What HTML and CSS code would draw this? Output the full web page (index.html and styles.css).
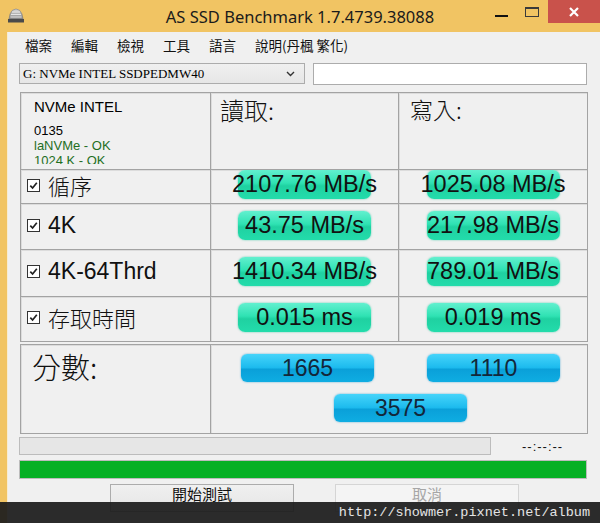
FILE: index.html
```html
<!DOCTYPE html>
<html lang="zh-Hant">
<head>
    <meta charset="UTF-8">
    <meta name="viewport" content="width=device-width, initial-scale=1.0">
    <title>AS SSD Benchmark</title>
    <link rel="stylesheet" href="styles.css">
</head>
<body>
    <div class="window">
        <div class="titlebar">
            <svg class="app-icon" width="18" height="15" viewBox="0 0 18 15">
                <defs>
                    <linearGradient id="dome" x1="0" y1="0" x2="0" y2="1">
                        <stop offset="0" stop-color="#d8d8d8"/>
                        <stop offset="1" stop-color="#8a8a8a"/>
                    </linearGradient>
                </defs>
                <path d="M2 11 L3 6 Q5 1 9 1 Q13 1 15 6 L16 11 Z" fill="url(#dome)" stroke="#777" stroke-width="0.6"/>
                <path d="M5 4 L13 4 M4 6.5 L14 6.5 M3.5 9 L14.5 9" stroke="#f2f2f2" stroke-width="0.8"/>
                <rect x="1" y="11" width="16" height="3.5" fill="#4a4a4a"/>
            </svg>
            <div class="title">AS SSD Benchmark 1.7.4739.38088</div>
            <div class="win-buttons">
                <span class="btn-min"></span>
                <span class="btn-max"></span>
                <span class="btn-close">
                    <svg width="10" height="10" viewBox="0 0 10 10">
                        <path d="M1 1 L9 9 M9 1 L1 9" stroke="#fff" stroke-width="2.2"/>
                    </svg>
                </span>
            </div>
        </div>

        <div class="frame">
            <div class="client">
                <ul class="menu">
                    <li>檔案</li>
                    <li>編輯</li>
                    <li>檢視</li>
                    <li>工具</li>
                    <li>語言</li>
                    <li>說明(丹楓 繁化)</li>
                </ul>

                <div class="drive-row">
                    <div class="combo">
                        <span>G: NVMe INTEL SSDPEDMW40</span>
                        <svg width="9" height="6" viewBox="0 0 9 6">
                            <path d="M1 1 L4.5 4.5 L8 1" fill="none" stroke="#333" stroke-width="1.4"/>
                        </svg>
                    </div>
                    <div class="textbox"></div>
                </div>

                <div class="results">
                    <div class="cell info">
                        <div class="drive-name">NVMe INTEL</div>
                        <div class="drive-lines">
                            <div>0135</div>
                            <div class="ok">laNVMe - OK</div>
                            <div class="ok">1024 K - OK</div>
                        </div>
                    </div>
                    <div class="cell head read">讀取:</div>
                    <div class="cell head write">寫入:</div>

                    <div class="cell label tight"><span class="check"></span><span class="cjk">循序</span></div>
                    <div class="cell value tight"><div class="pill">2107.76 MB/s</div></div>
                    <div class="cell value tight"><div class="pill">1025.08 MB/s</div></div>

                    <div class="cell label"><span class="check"></span><span>4K</span></div>
                    <div class="cell value"><div class="pill">43.75 MB/s</div></div>
                    <div class="cell value"><div class="pill">217.98 MB/s</div></div>

                    <div class="cell label"><span class="check"></span><span>4K-64Thrd</span></div>
                    <div class="cell value"><div class="pill">1410.34 MB/s</div></div>
                    <div class="cell value"><div class="pill">789.01 MB/s</div></div>

                    <div class="cell label last"><span class="check"></span><span class="cjk">存取時間</span></div>
                    <div class="cell value last"><div class="pill">0.015 ms</div></div>
                    <div class="cell value last"><div class="pill">0.019 ms</div></div>
                </div>

                <div class="score">
                    <div class="cell score-label">分數:</div>
                    <div class="cell score-values">
                        <div class="score-row">
                            <div class="score-pill">1665</div>
                            <div class="score-pill">1110</div>
                        </div>
                        <div class="score-row">
                            <div class="score-pill">3575</div>
                        </div>
                    </div>
                </div>

                <div class="progress-row">
                    <div class="progress"></div>
                    <div class="time">--:--:--</div>
                </div>
                <div class="green-bar"></div>

                <div class="actions">
                    <button class="btn">開始測試</button>
                    <button class="btn" disabled>取消</button>
                </div>
            </div>
        </div>

        <div class="watermark">http://showmer.pixnet.net/album</div>
    </div>
</body>
</html>
```

FILE: styles.css
```css
* {
    box-sizing: border-box;
}
html, body {
    margin: 0;
    padding: 0;
}
body {
    width: 600px;
    height: 523px;
    overflow: hidden;
    font-family: "Liberation Sans", Arial, sans-serif;
    background: #f0f0f0;
}
.window {
    position: relative;
    width: 600px;
    height: 523px;
    background: #f1c463;
    display: flex;
    flex-direction: column;
}

/* title bar */
.titlebar {
    flex: none;
    height: 32px;
    display: grid;
    grid-template-columns: 1fr auto 1fr;
    align-items: start;
}
.app-icon {
    margin: 8px 0 0 7px;
}
.title {
    font-family: "Noto Sans", "Liberation Sans", sans-serif;
    font-size: 16.5px;
    line-height: 34px;
    color: #1b1b1b;
}
.win-buttons {
    justify-self: end;
    display: flex;
    align-items: flex-start;
}
.btn-min {
    width: 13px;
    height: 2px;
    background: #111;
    margin: 15px 17px 0 0;
}
.btn-max {
    width: 14px;
    height: 10px;
    border: 1px solid #3a3a3a;
    border-top-width: 2px;
    margin: 7px 9px 0 0;
}
.btn-close {
    width: 52px;
    height: 23px;
    background: #c9524b;
    display: flex;
    align-items: center;
    justify-content: center;
}

/* client area */
.frame {
    flex: 1;
    display: flex;
    padding-left: 7px;
}
.client {
    flex: 1;
    background: #f0f0f0;
    border-left: 1px solid #f7ecd2;
}
.menu {
    list-style: none;
    margin: 0;
    padding: 0 0 0 17px;
    height: 26px;
    display: flex;
    gap: 19px;
    font-family: "Noto Sans CJK TC", sans-serif;
    font-size: 13.5px;
    line-height: 26px;
    color: #111;
}
.drive-row {
    display: flex;
    gap: 8px;
    margin: 5px 0 0 11px;
}
.combo {
    width: 286px;
    height: 21px;
    border: 1px solid #acacac;
    background: linear-gradient(#f0f0f0, #e6e6e6);
    display: flex;
    align-items: center;
    justify-content: space-between;
    padding: 0 9px 0 3px;
    font-family: "Liberation Serif", serif;
    font-size: 13px;
    color: #000;
}
.textbox {
    width: 274px;
    height: 22px;
    border: 1px solid #acacac;
    background: #fff;
}

/* results table */
.results, .score {
    display: grid;
    gap: 1px;
    width: 568px;
    margin-left: 12px;
    border: 1px solid #a3a3a3;
    background: #a3a3a3;
}
.results {
    margin-top: 7px;
    grid-template-columns: 189px 187px 188px;
    grid-template-rows: 76px 33px 45px 46px 44px;
}
.cell {
    background: #f0f0f0;
    box-shadow: inset 1px 1px 0 #dcdcdc;
    overflow: hidden;
}
.info {
    padding: 5px 13px 0;
}
.drive-name {
    font-size: 15px;
    line-height: 17px;
    margin-bottom: 8px;
}
.drive-lines {
    height: 41px;
    overflow: hidden;
    font-size: 13px;
    line-height: 15px;
}
.drive-lines .ok {
    color: #1f6f1f;
}
.head {
    overflow: visible;
    font-family: "Noto Sans CJK TC", sans-serif;
    font-weight: 300;
    font-size: 24px;
    line-height: 34px;
    color: #111;
}
.read {
    padding: 0 0 0 9px;
}
.write {
    padding: 0 0 0 11px;
    font-size: 23px;
    line-height: 32px;
}
.label {
    display: flex;
    align-items: flex-start;
    padding: 7px 0 0 6px;
    font-size: 23px;
    line-height: 29px;
    color: #111;
}
.label .check {
    width: 13px;
    height: 13px;
    margin: 8px 8px 0 0;
    border: 1px solid #333;
    background: #fff url("data:image/svg+xml,%3Csvg xmlns='http://www.w3.org/2000/svg' width='11' height='11'%3E%3Cpath d='M2.3 5.6 L4.6 8 L8.8 2.8' fill='none' stroke='%23222' stroke-width='1.7'/%3E%3C/svg%3E") no-repeat center;
}
.label .cjk {
    font-family: "Noto Sans CJK TC", sans-serif;
    font-weight: 300;
    font-size: 22px;
}
.label.tight {
    padding-top: 1px;
}
.label.last {
    padding-top: 6px;
}
.value {
    display: flex;
    justify-content: center;
    padding-top: 7px;
}
.value.tight {
    padding-top: 0;
}
.value.last {
    padding-top: 6px;
}
.pill {
    width: 133px;
    height: 29px;
    border-radius: 7px;
    background: linear-gradient(#62f0cf, #2fe2b3 45%, #1fd1a1 55%, #23dcab);
    box-shadow: 0 0 2px rgba(20, 190, 150, 0.7);
    display: flex;
    justify-content: center;
    align-items: center;
    white-space: nowrap;
    font-size: 23.5px;
    color: #111;
}

/* score */
.score {
    margin-top: 2px;
    grid-template-columns: 189px 1fr;
    height: 90px;
}
.score-label {
    padding: 3px 0 0 11px;
    font-family: "Noto Sans CJK TC", sans-serif;
    font-weight: 300;
    font-size: 29px;
    line-height: 36px;
    color: #111;
}
.score-values {
    display: flex;
    flex-direction: column;
    align-items: center;
    gap: 12px;
    padding-top: 9px;
}
.score-row {
    display: flex;
    gap: 53px;
    padding-left: 3px;
}
.score-pill {
    width: 133px;
    height: 28px;
    border-radius: 6px;
    background: linear-gradient(#46d4fa, #1dbbee 48%, #0aa0d9 55%, #0fade2);
    box-shadow: 0 0 2px rgba(10, 140, 200, 0.7);
    display: flex;
    justify-content: center;
    align-items: center;
    font-size: 23px;
    color: #13273a;
}

/* progress and buttons */
.progress-row {
    display: flex;
    align-items: center;
    margin: 3px 0 0 11px;
}
.progress {
    width: 472px;
    height: 18px;
    border: 1px solid #bcbcbc;
    background: #e6e6e6;
}
.time {
    margin-left: 31px;
    font-size: 13px;
    letter-spacing: 1px;
    color: #111;
}
.green-bar {
    width: 568px;
    height: 19px;
    margin: 5px 0 0 11px;
    border: 1px solid #bcbcbc;
    background: #06b025;
}
.actions {
    display: flex;
    gap: 41px;
    margin: 5px 0 0 102px;
}
.btn {
    width: 184px;
    height: 28px;
    border: 1px solid #acacac;
    background: linear-gradient(#f0f0f0, #e5e5e5);
    font-family: "Noto Sans CJK TC", sans-serif;
    font-size: 15px;
    line-height: 18px;
    color: #111;
    padding: 0 0 8px;
}
.btn:disabled {
    border-color: #d5d5d5;
    background: #f4f4f4;
    color: #a6a6a6;
}

/* watermark over the bottom edge */
.watermark {
    position: absolute;
    left: 0;
    right: 0;
    bottom: 0;
    height: 21px;
    padding-right: 10px;
    background: rgba(28, 28, 28, 0.93);
    text-align: right;
    font-family: "Liberation Mono", monospace;
    font-size: 13.5px;
    line-height: 21px;
    color: #e4e4e4;
}
```
